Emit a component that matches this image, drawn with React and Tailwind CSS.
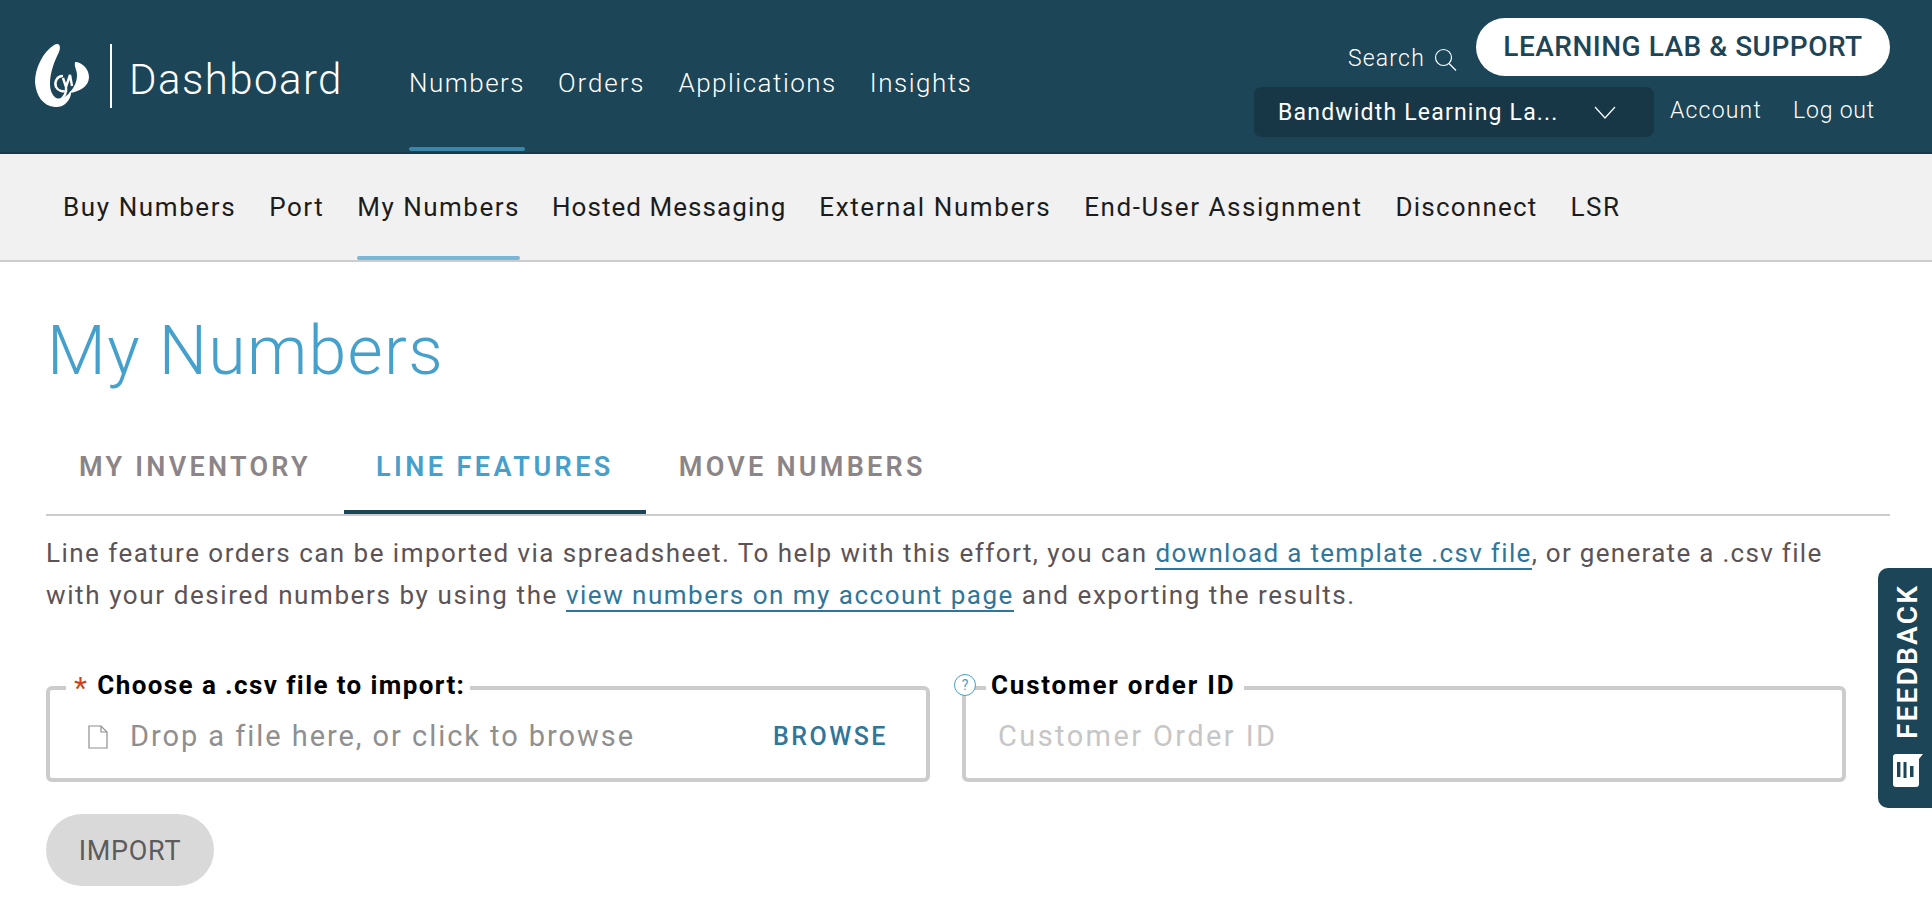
import React from "react";

const font = { fontFamily: '"Roboto", "Liberation Sans", sans-serif' };

function Logo() {
  return (
    <svg width="54" height="64" viewBox="0 0 54 64" className="shrink-0">
      <path fill="#fff" d="M19 1C25-2 26 3 24 8 19 18 15 29 15 40c0 6 2 11 6 14 6 2 10-1 15-7 1 8-7 17-16 16C8 62 1 52 0 38 0 24 8 8 19 1Z" />
      <path fill="#fff" d="M40 18c7 0 14 7 14 15 0 9-9 15-20 16 4-4 8-10 8-18 0-5-3-8-2-13Z" />
      <path fill="none" stroke="#fff" strokeWidth="2.4" d="M28 32c-6 0-9 6-7 11 2 4 7 5 11 4M28 34l3 9 4-12 2 11M31 43c1 6-1 10-7 14" />
    </svg>
  );
}

function TopLink({ children, active, track = "tracking-[1.5px]" }) {
  return (
    <a className={`relative flex h-full items-center pt-[14px] text-[26px] font-light ${track}`}>
      {children}
      {active && <span className="absolute bottom-[1px] left-0 right-0 h-[4px] rounded-sm bg-[#3a87aa]" />}
    </a>
  );
}

function SubLink({ children, active, track = "tracking-[1.5px]", extra = "" }) {
  return (
    <a className={`relative flex h-full items-center text-[26px] text-[#1c1c1c] ${track} ${extra}`}>
      {children}
      {active && <span className="absolute bottom-[0px] left-0 right-0 h-[4px] rounded-sm bg-[#7ab6d6]" />}
    </a>
  );
}

function Tab({ children, active }) {
  return (
    <a className={`flex h-[90px] items-center border-b-[4px] text-[27px] font-semibold ${active ? "border-[#1c4558] px-[32px] tracking-[3.45px] text-[#45a0cc]" : "border-transparent px-[33px] tracking-[3.25px] text-[#8c8587]"}`}>
      {children}
    </a>
  );
}

function TextLink({ children, track }) {
  return <a className={`border-b-2 border-[#2f769a] text-[#2f769a] ${track}`}>{children}</a>;
}

export default function App() {
  return (
    <div className="relative h-[898px] overflow-hidden bg-white" style={font}>
      <header className="flex h-[154px] items-stretch justify-between border-b-2 border-[#183a4a] bg-[#1c4558] pr-[42px] text-white">
        <div className="flex items-stretch">
          <div className="flex items-center pl-[35px]">
            <Logo />
            <span className="ml-[21px] h-[64px] w-[2px] bg-white" />
            <span className="ml-[17px] mt-[6px] text-[42px] font-light tracking-[1.45px]">Dashboard</span>
          </div>
          <nav className="ml-[66px] flex items-stretch gap-[33px]">
            <TopLink active>Numbers</TopLink>
            <TopLink track="tracking-[1.9px]">Orders</TopLink>
            <TopLink>Applications</TopLink>
            <TopLink>Insights</TopLink>
          </nav>
        </div>
        <div className="flex flex-col items-end pt-[18px]">
          <div className="flex items-center gap-[19px]">
            <span className="mt-[24px] flex items-center gap-[9px] text-[23px] font-light tracking-[1.2px]">
              Search
              <svg width="23" height="23" viewBox="0 0 23 23" fill="none" stroke="#fff" strokeWidth="1.2">
                <circle cx="9.5" cy="9.5" r="8" /><path d="M15 15.5l7 7" />
              </svg>
            </span>
            <a className="flex h-[58px] w-[414px] items-center justify-center rounded-full bg-white text-[28px] font-medium tracking-[0.5px] text-[#1c4558]">
              LEARNING LAB &amp; SUPPORT
            </a>
          </div>
          <div className="mt-[10px] flex items-center pr-[15px]">
            <div className="flex h-[50px] w-[400px] items-center justify-between rounded-[8px] bg-[#173646] pl-[24px] pr-[38px] text-[23px] tracking-[1.2px]">
              <span className="mt-[4px]">Bandwidth Learning La...</span>
              <svg width="22" height="14" viewBox="0 0 22 14" fill="none" stroke="#fff" strokeWidth="1.2" className="mt-[3px]"><path d="M1 1l10 11L21 1" /></svg>
            </div>
            <a className="ml-[16px] text-[23px] font-light tracking-[1.2px]">Account</a>
            <a className="ml-[31px] text-[23px] font-light tracking-[0.8px]">Log out</a>
          </div>
        </div>
      </header>

      <nav className="flex h-[108px] items-stretch gap-[33px] border-b-2 border-[#cccccc] bg-[#f1f1f1] pl-[63px]">
        <SubLink track="tracking-[1.6px]">Buy Numbers</SubLink>
        <SubLink>Port</SubLink>
        <SubLink active>My Numbers</SubLink>
        <SubLink track="tracking-[1.05px]" extra="-ml-[1px]">Hosted Messaging</SubLink>
        <SubLink track="tracking-[1.6px]">External Numbers</SubLink>
        <SubLink track="tracking-[1.55px]">End-User Assignment</SubLink>
        <SubLink track="tracking-[1.2px]">Disconnect</SubLink>
        <SubLink>LSR</SubLink>
      </nav>

      <main className="pl-[46px] pr-[42px]">
        <h1 className="ml-[1px] mt-[41px] h-[96px] text-[68px] font-light leading-[96px] tracking-[1.3px] text-[#45a0cc]">My Numbers</h1>
        <div className="mt-[25px] flex h-[92px] border-b-2 border-[#cccccc]">
          <Tab>MY INVENTORY</Tab>
          <Tab active>LINE FEATURES</Tab>
          <Tab>MOVE NUMBERS</Tab>
        </div>
        <p className="mt-[16px] text-[26px] leading-[42px] tracking-[1.47px] text-[#5b5356]">
          Line feature orders can be imported via spreadsheet. To help with this effort, you can <TextLink track="tracking-[1.33px]">download a template .csv file</TextLink><span className="tracking-[1.3px]">, or generate a .csv file</span>
          <br />
          <span className="tracking-[1.6px]">with your desired numbers by using the</span> <TextLink track="tracking-[1.5px]">view numbers on my account page</TextLink> <span className="tracking-[1.55px]">and exporting the results.</span>
        </p>

        <div className="mt-[58px] flex gap-[32px]">
          <fieldset className="h-[108px] w-[884px] shrink-0 rounded-[6px] border-[4px] border-[#cccccc] pl-[20px] pr-[38px]">
            <legend className="-mb-[2px] -ml-[4px] flex h-[28px] items-center pb-[6px] pl-[8px] pr-[5px] text-[26px] font-bold leading-[28px] tracking-[1.4px] text-black">
              <span className="mr-[9px] mt-[6px] text-[30px] font-normal text-[#d0421b]">*</span>Choose a .csv file to import:
            </legend>
            <div className="flex h-[68px] items-center justify-between pt-[5px]">
              <div className="flex items-center text-[#8f8f8f]">
                <svg width="20" height="24" viewBox="0 0 20 24" fill="none" stroke="#8f8f8f" strokeWidth="1.2" className="ml-[18px] mr-[22px]">
                  <path d="M1 1h12l6 6v16H1Z" /><path d="M13 1v6h6" />
                </svg>
                <span className="text-[29px] tracking-[1.95px]">Drop a file here, or click to browse</span>
              </div>
              <span className="text-[25px] font-medium tracking-[2.5px] text-[#2f769a]">BROWSE</span>
            </div>
          </fieldset>

          <div className="relative w-[884px] shrink-0">
            <fieldset className="h-[108px] rounded-[6px] border-[4px] border-[#cccccc] pl-[32px]">
              <legend className="-mb-[2px] -ml-[12px] flex h-[28px] items-center pb-[6px] pl-[5px] pr-[9px] text-[26px] font-bold leading-[28px] tracking-[1.8px] text-black">
                Customer order ID
              </legend>
              <div className="flex h-[68px] items-center pt-[5px] text-[29px] tracking-[2.4px] text-[#c6c6c6]">Customer Order ID</div>
            </fieldset>
            <span className="absolute -left-[8px] top-0 flex h-[22px] w-[22px] items-center justify-center rounded-full border border-[#45a0cc] bg-white text-[14px] text-[#45a0cc]">?</span>
          </div>
        </div>

        <button className="mt-[32px] flex h-[72px] w-[168px] items-center justify-center rounded-full bg-[#d9d9d9] pt-[2px] text-[27px] tracking-[0.7px] text-[#5c5c5c]">IMPORT</button>
      </main>

      <aside className="absolute left-[1878px] top-[568px] flex h-[240px] w-[54px] flex-col items-center rounded-l-[10px] bg-[#1c4558] pb-[21px] pl-[6px] pt-[15px] text-white">
        <span className="h-[156px] rotate-180 text-center text-[28px] font-semibold leading-[48px] tracking-[2.2px] [writing-mode:vertical-rl]">FEEDBACK</span>
        <svg width="30" height="33" viewBox="0 0 30 33" className="mt-auto">
          <path fill="#fff" d="M3 0H30L26 5V30a3 3 0 0 1-3 3H3a3 3 0 0 1-3-3V3a3 3 0 0 1 3-3Z" />
          <path fill="#1c4558" d="M4 8h3.4v15H4ZM10.5 8h3v16h-3ZM17 12h3.5v11H17Z" />
        </svg>
      </aside>
    </div>
  );
}
